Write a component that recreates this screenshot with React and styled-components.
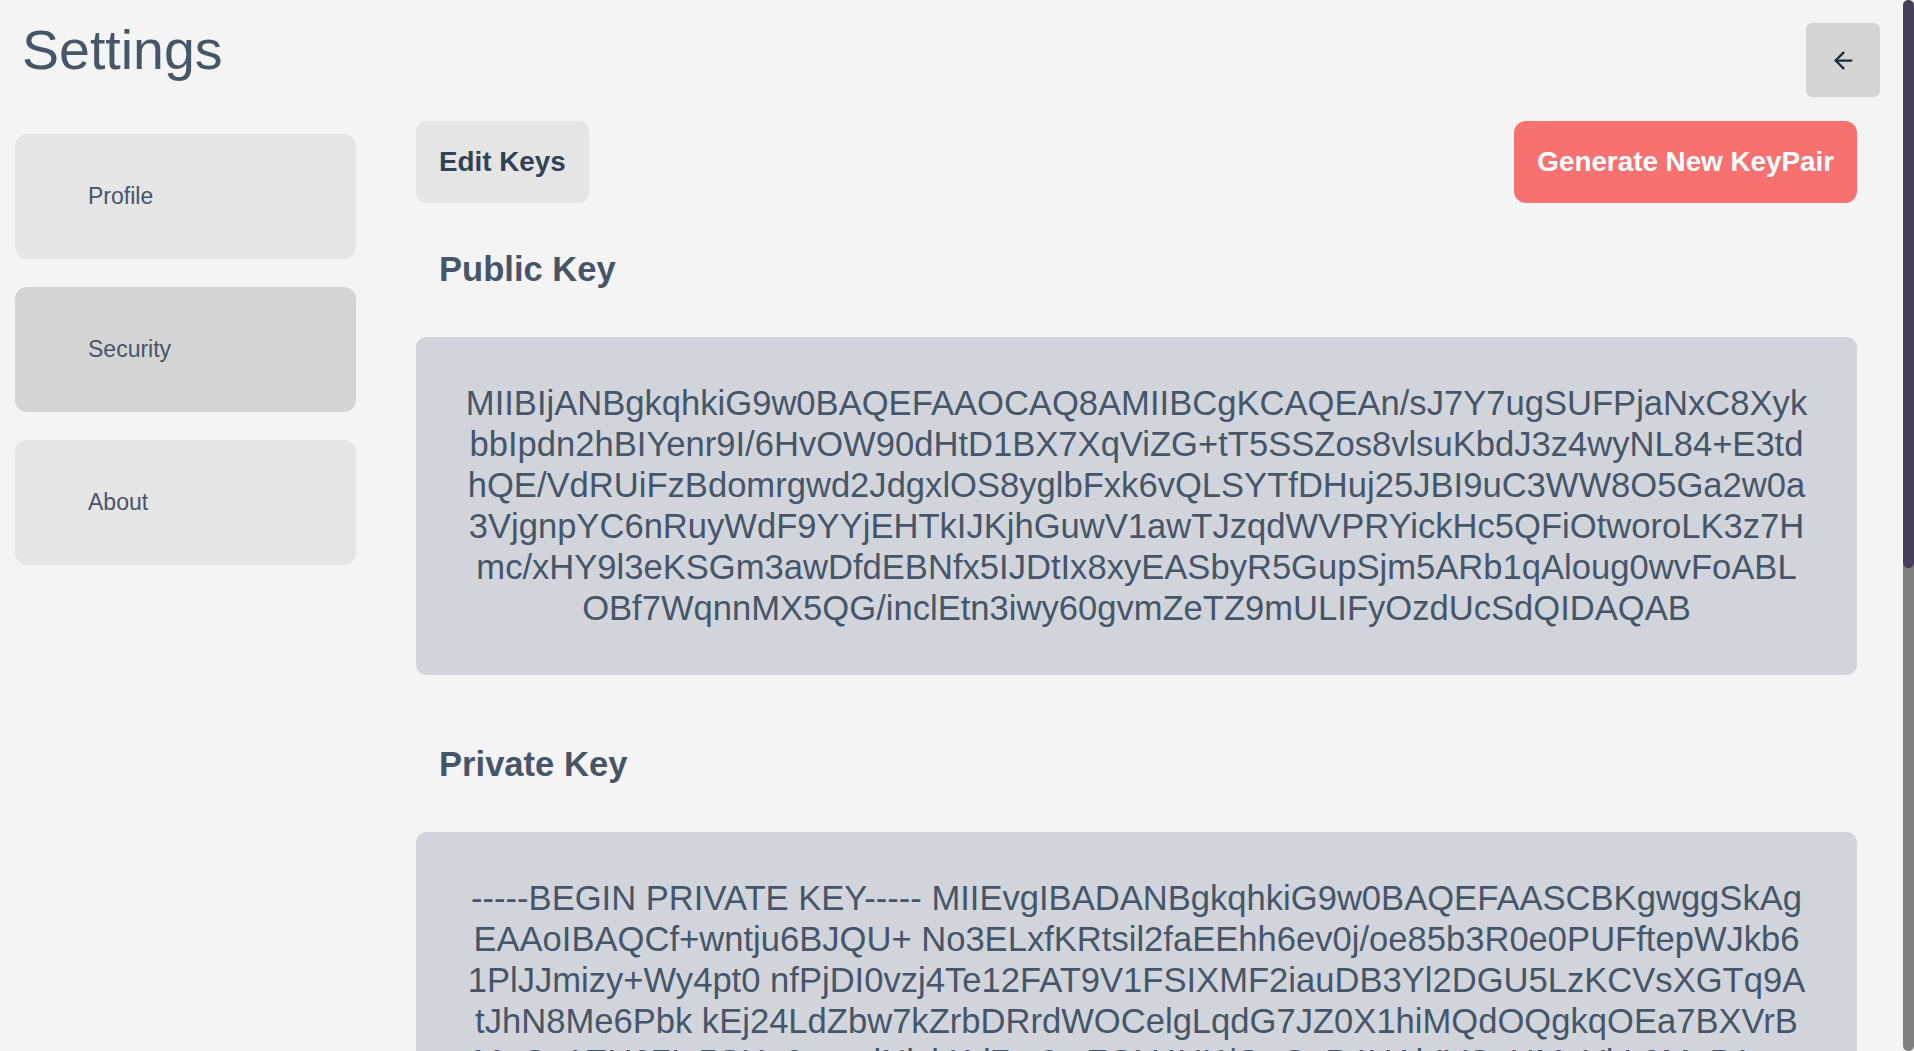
import { styled, createGlobalStyle } from 'styled-components';
import { ArrowLeft } from 'lucide-react';

const GlobalStyle = createGlobalStyle`
  html, body {
    margin: 0;
    padding: 0;
    background: #f4f4f4;
    font-family: 'Liberation Sans', Arial, sans-serif;
    overflow: hidden;
  }
`;

const Frame = styled.div`
  display: flex;
  height: 100vh;
`;

const Scroller = styled.div`
  flex: 1;
  min-width: 0;
  overflow-y: auto;
  scrollbar-width: none;

  &::-webkit-scrollbar {
    display: none;
  }
`;

const ScrollRail = styled.div`
  width: 11px;
  flex-shrink: 0;
  display: flex;
  flex-direction: column;
  background: #808080;
  border-radius: 6px;
`;

const ScrollThumb = styled.div`
  height: 54%;
  background: #483d5b;
  border-radius: 6px;
`;

const Header = styled.header`
  display: flex;
  justify-content: space-between;
  align-items: flex-start;
  padding: 23px 23px 0 22px;
`;

const Title = styled.h1`
  margin: 0;
  font-size: 55.5px;
  line-height: 1;
  font-weight: 400;
  color: #475569;
`;

const BackButton = styled.button`
  width: 74px;
  height: 74px;
  border: none;
  border-radius: 6px;
  background: #d4d4d4;
  color: #1e293b;
  display: flex;
  align-items: center;
  justify-content: center;
  cursor: pointer;
`;

const Body = styled.div`
  display: grid;
  grid-template-columns: 341px 1fr;
  column-gap: 60px;
  padding: 0 46px 24px 15px;
  margin-top: 24px;
`;

const Sidebar = styled.nav`
  display: flex;
  flex-direction: column;
  gap: 28px;
  padding-top: 13px;
`;

const NavItem = styled.div`
  height: 125px;
  display: flex;
  align-items: center;
  padding-left: 73px;
  border-radius: 12px;
  background: ${(p) => (p.$active ? '#d4d4d4' : '#e5e5e5')};
  color: #475569;
  font-size: 23px;
  cursor: pointer;
`;

const Main = styled.main`
  display: flex;
  flex-direction: column;
  min-width: 0;
`;

const Toolbar = styled.div`
  display: flex;
  justify-content: space-between;
  align-items: center;
`;

const ActionButton = styled.button`
  height: 82px;
  padding: 0 23px;
  border: none;
  border-radius: ${(p) => (p.$primary ? '12px' : '10px')};
  background: ${(p) => (p.$primary ? '#f87171' : '#e5e5e5')};
  color: ${(p) => (p.$primary ? '#ffffff' : '#334155')};
  font-family: inherit;
  font-size: 27.8px;
  font-weight: 700;
  cursor: pointer;
`;

const SectionTitle = styled.h2`
  margin: ${(p) => (p.$first ? '47px' : '70px')} 0 48px;
  padding-left: 23px;
  font-size: 34.6px;
  font-weight: 700;
  line-height: normal;
  color: #475569;
`;

const KeyBox = styled.div`
  background: #d1d5db;
  border-radius: 10px;
  padding: 46px 49.5px;
  color: #475569;
  font-size: 34.6px;
  line-height: 41px;
  text-align: center;
  word-break: break-all;
`;

const PUBLIC_KEY =
  'MIIBIjANBgkqhkiG9w0BAQEFAAOCAQ8AMIIBCgKCAQEAn/sJ7Y7ugSUFPjaNxC8Xyk' +
  'bbIpdn2hBIYenr9I/6HvOW90dHtD1BX7XqViZG+tT5SSZos8vlsuKbdJ3z4wyNL84+E3td' +
  'hQE/VdRUiFzBdomrgwd2JdgxlOS8yglbFxk6vQLSYTfDHuj25JBI9uC3WW8O5Ga2w0a' +
  '3VjgnpYC6nRuyWdF9YYjEHTkIJKjhGuwV1awTJzqdWVPRYickHc5QFiOtworoLK3z7H' +
  'mc/xHY9l3eKSGm3awDfdEBNfx5IJDtIx8xyEASbyR5GupSjm5ARb1qAloug0wvFoABL' +
  'OBf7WqnnMX5QG/inclEtn3iwy60gvmZeTZ9mULIFyOzdUcSdQIDAQAB';

// the rest of the private key is below the fold, fill it with stable noise
const B64 = 'ABCDEFGHIJKLMNOPQRSTUVWXYZabcdefghijklmnopqrstuvwxyz0123456789+/';
const fill = (n, seed) => {
  let s = seed;
  let out = '';
  for (let i = 0; i < n; i++) {
    s = (s * 16807) % 2147483647;
    out += B64[(s >> 7) % 64];
  }
  return out;
};

const pemLines = [
  'MIIEvgIBADANBgkqhkiG9w0BAQEFAASCBKgwggSkAgEAAoIBAQCf+wntju6BJQU+',
  'No3ELxfKRtsil2faEEhh6ev0j/oe85b3R0e0PUFftepWJkb61PlJJmizy+Wy4pt0',
  'nfPjDI0vzj4Te12FAT9V1FSIXMF2iauDB3Yl2DGU5LzKCVsXGTq9AtJhN8Me6Pbk',
  'kEj24LdZbw7kZrbDRrdWOCelgLqdG7JZ0X1hiMQdOQgkqOEa7BXVrBMqQs1EU07L',
];
for (let i = 0; i < 21; i++) pemLines.push(fill(64, 7919 + i * 131));
pemLines.push(fill(22, 4242) + '==');

const PRIVATE_KEY =
  '-----BEGIN PRIVATE KEY----- ' + pemLines.join(' ') + ' -----END PRIVATE KEY-----';

const App = () => {
  return (
    <Frame>
      <GlobalStyle />
      <Scroller>
        <Header>
          <Title>Settings</Title>
          <BackButton aria-label="Back">
            <ArrowLeft size={27} strokeWidth={2} />
          </BackButton>
        </Header>
        <Body>
          <Sidebar>
            <NavItem>Profile</NavItem>
            <NavItem $active>Security</NavItem>
            <NavItem>About</NavItem>
          </Sidebar>
          <Main>
            <Toolbar>
              <ActionButton>Edit Keys</ActionButton>
              <ActionButton $primary>Generate New KeyPair</ActionButton>
            </Toolbar>
            <SectionTitle $first>Public Key</SectionTitle>
            <KeyBox>{PUBLIC_KEY}</KeyBox>
            <SectionTitle>Private Key</SectionTitle>
            <KeyBox>{PRIVATE_KEY}</KeyBox>
          </Main>
        </Body>
      </Scroller>
      <ScrollRail>
        <ScrollThumb />
      </ScrollRail>
    </Frame>
  );
};

export default App;
